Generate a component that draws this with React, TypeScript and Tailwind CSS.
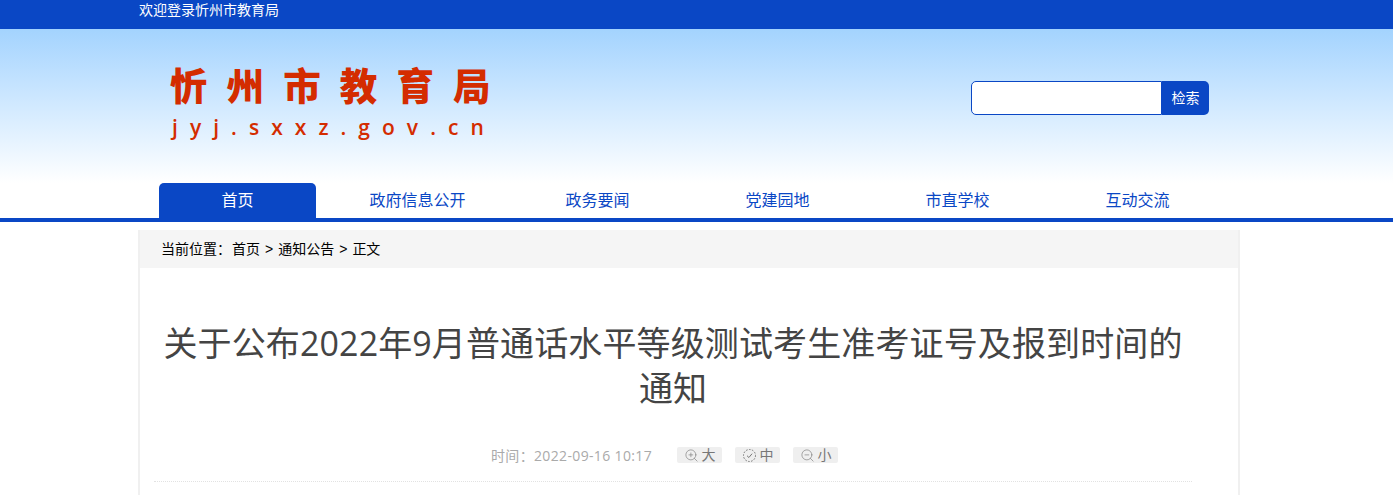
import React from "react";
import { ZoomIn, ZoomOut } from "lucide-react";

const font = { fontFamily: '"Liberation Sans", "Noto Sans CJK SC", sans-serif' };
const openFont = { fontFamily: '"Open Sans", "Noto Sans CJK SC", sans-serif' };
const nav = ["首页", "政府信息公开", "政务要闻", "党建园地", "市直学校", "互动交流"];

function DashedCheck() {
  return (
    <svg width="15" height="15" viewBox="0 0 15 15" fill="none" stroke="currentColor" strokeWidth="1">
      <circle cx="7.5" cy="7.5" r="6" strokeDasharray="1.6 1.4" />
      <path d="M5 7.7 L6.9 9.5 L10.1 5.7" />
    </svg>
  );
}

const badge = "mb-[2px] flex h-[16px] w-[45px] items-center justify-center gap-[3px] rounded-[2px] bg-[#efefef] text-[#777777]";

export default function App() {
  return (
    <div className="h-[495px] overflow-hidden bg-white" style={font}>
      <div className="h-[29px] bg-[#0a47c5] pl-[139px] text-[14px] leading-[21px] text-white">欢迎登录忻州市教育局</div>
      <div className="flex h-[154px] items-start bg-gradient-to-b from-[#a3d3fe] to-white pl-[170px] pr-[184px]">
        <div className="mt-[35px] flex w-[330px] flex-col text-[#d42c00]">
          <div className="whitespace-nowrap text-[37.5px] font-black leading-[46px] tracking-[19.1px]">忻州市教育局</div>
          <div className="mt-[4px] whitespace-nowrap pl-[2px] text-[21px] font-semibold leading-[26px] tracking-[12.05px]" style={{ fontFamily: '"Open Sans", sans-serif' }}>jyj.sxxz.gov.cn</div>
        </div>
        <div className="ml-auto mt-[52px] flex h-[34px] w-[238px]">
          <div className="w-[191px] rounded-l-[5px] border border-[#0a47c5] bg-white" />
          <div className="flex w-[47px] items-center justify-center rounded-r-[5px] bg-[#0a47c5] pt-[1px] text-[14px] text-white">检索</div>
        </div>
      </div>
      <div className="h-[39px] border-b-4 border-[#0a47c5] pl-[147.5px]">
        <div className="flex h-[35px]">
          {nav.map((n, i) => (
            <div key={n} className="flex h-[35px] w-[180px] justify-center">
              <div className={i === 0 ? "h-[35px] w-[157px] rounded-t-[5px] bg-[#0a47c5] text-center text-[16px] leading-[35px] text-white" : "h-[35px] w-[157px] text-center text-[16px] leading-[35px] text-[#0a47c5]"}>{n}</div>
            </div>
          ))}
        </div>
      </div>
      <div className="ml-[138px] mt-[8px] h-[300px] w-[1102px] border-x-2 border-[#f0f0f0]">
        <div className="flex h-[38px] items-center bg-[#f5f5f5] pl-[21px] pt-[1px] text-[14px] text-black">
          <span>当前位置：</span>
          <span className="ml-[1px]">首页</span>
          <span className="mx-[5px]">&gt;</span>
          <span>通知公告</span>
          <span className="mx-[5px]">&gt;</span>
          <span>正文</span>
        </div>
        <h1 className="ml-[18px] mt-[53px] w-[1030px] text-center text-[34px] font-normal leading-[45px] tracking-[0.12px] text-[#444444]" style={openFont}>关于公布2022年9月普通话水平等级测试考生准考证号及报到时间的通知</h1>
        <div className="ml-[14px] mt-[36px] h-[35px] w-[1038px] border-b border-dotted border-[#e2e2e2]">
          <div className="flex items-center justify-center pr-[17px] text-[14px] leading-[18px] text-[#aaaaaa]" style={openFont}>
            <span className="tracking-[0.35px]">时间：2022-09-16 10:17</span>
            <div className={`ml-[25px] ${badge}`}><ZoomIn size={15} strokeWidth={1} /><span>大</span></div>
            <div className={`ml-[13px] ${badge}`}><DashedCheck /><span>中</span></div>
            <div className={`ml-[13px] ${badge}`}><ZoomOut size={15} strokeWidth={1} /><span>小</span></div>
          </div>
        </div>
      </div>
    </div>
  );
}
